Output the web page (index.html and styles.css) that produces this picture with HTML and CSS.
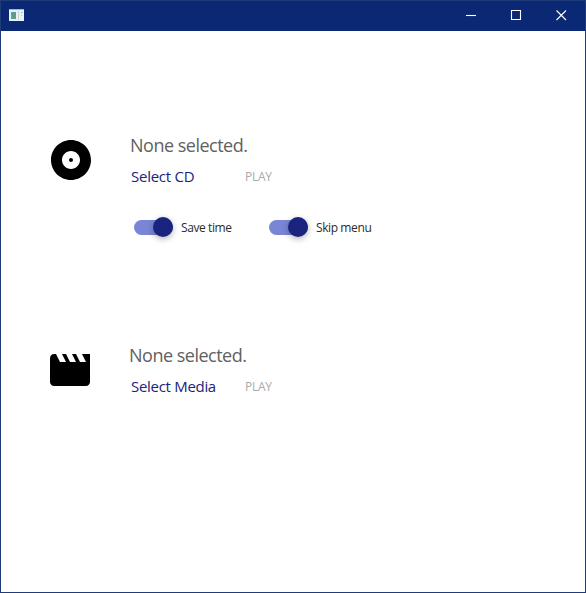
FILE: index.html
```html
<!DOCTYPE html>
<html lang="en">
<head>
<meta charset="utf-8">
<title>Player</title>
<link rel="stylesheet" href="styles.css">
</head>
<body>
<div class="window">
  <header class="titlebar">
    <svg class="app-icon" width="15" height="12" viewBox="0 0 15 12"><path fill="#e9f1f3" d="M0 0h15v12H0z"/><path fill="#9cb8cf" d="M0 0h15v1H0z"/><path fill="#5b9c92" d="M2 3h5v7H2z"/><path fill="#7798bd" d="M2 3h1v7H2z"/><path fill="#c3d8dc" d="M9 2h1v9H9z"/><path fill="#a9c6cf" d="M12 3h2v1h-2zM12 6h1v1h-1z"/></svg>
    <div class="controls">
      <svg width="45" height="30" viewBox="0 0 45 30"><path d="M20 14.500h10"/></svg>
      <svg width="45" height="30" viewBox="0 0 45 30"><path d="M20.500 9.500h9v9h-9z"/></svg>
      <svg width="45" height="30" viewBox="0 0 45 30"><path d="M20.500 9.500l9.500 9.500M30 9.500l-9.500 9.500"/></svg>
    </div>
  </header>
  <main>
    <section class="source cd">
      <svg class="icon" viewBox="0 0 24 24"><path d="M12 2C6.480 2 2 6.480 2 12s4.480 10 10 10 10-4.480 10-10S17.520 2 12 2zm0 14.500c-2.490 0-4.500-2.010-4.500-4.500S9.510 7.500 12 7.500s4.500 2.010 4.500 4.500-2.010 4.500-4.500 4.500zm0-5.500c-.55 0-1 .45-1 1s.45 1 1 1 1-.45 1-1-.45-1-1-1z"/></svg>
      <div class="body">
        <h2>None selected.</h2>
        <div class="actions"><a class="select-cd">Select CD</a><span class="play">PLAY</span></div>
        <div class="toggles">
          <div class="toggle"><span class="track"><i class="thumb"></i></span><span>Save time</span></div>
          <div class="toggle"><span class="track"><i class="thumb"></i></span><span>Skip menu</span></div>
        </div>
      </div>
    </section>
    <section class="source media">
      <svg class="icon" viewBox="0 0 24 24"><path d="M18 4l2 4h-3l-2-4h-2l2 4h-3l-2-4H8l2 4H7L5 4H4c-1.100 0-1.990.9-1.990 2L2 18c0 1.100.9 2 2 2h16c1.100 0 2-.9 2-2V4h-4z"/></svg>
      <div class="body">
        <h2>None selected.</h2>
        <div class="actions"><a class="select-media">Select Media</a><span class="play">PLAY</span></div>
      </div>
    </section>
  </main>
</div>
</body>
</html>
```
FILE: styles.css
```css
* { box-sizing: border-box; }
body { margin: 0; font-family: "Open Sans", "Noto Sans", sans-serif; }
.window { width: 586px; height: 593px; border: 1px solid #203c78; background: #fff; overflow: hidden; }
.titlebar { height: 30px; background: #0a2874; display: flex; align-items: center; justify-content: space-between; padding-left: 8px; }
.app-icon { display: block; margin-top: -2px; }
.controls { display: flex; margin-right: 4px; }
.controls svg { display: block; fill: none; stroke: #fff; stroke-width: 1.1; }
main { padding: 99px 0 0 45px; }
.source { display: flex; height: 210px; }
.icon { width: 48px; height: 48px; margin-top: 6px; flex: none; }
.cd .icon { margin-left: 1px; }
.body { margin-left: 35px; }
h2 { margin: 0; height: 31px; font-weight: 400; font-size: 18px; line-height: 31px; color: #616161; letter-spacing: -0.5px; white-space: nowrap; }
.actions { display: grid; grid-template-columns: 115px auto; height: 31px; line-height: 31px; font-size: 15px; color: #1a237e; white-space: nowrap; }
.media .actions { margin-left: 1px; }
.select-cd { letter-spacing: -0.25px; }
.select-media { letter-spacing: -0.3px; }
.actions a { padding-left: 1px; }
.play { font-size: 12px; color: #aaa; letter-spacing: -0.3px; }
.toggles { display: flex; margin: 25px 0 0 4px; }
.toggle { display: flex; align-items: center; width: 135px; height: 20px; font-size: 12px; color: #2b2b2b; letter-spacing: -0.4px; white-space: nowrap; }
.track { display: flex; align-items: center; justify-content: flex-end; width: 38.500px; height: 15px; margin-right: 8.500px; border-radius: 7.500px; background: #7986d6; }
.thumb { width: 20px; height: 20px; flex: none; border-radius: 50%; background: #1a237e; box-shadow: 0 2px 6px rgba(0, 0, 0, .3); }
```
